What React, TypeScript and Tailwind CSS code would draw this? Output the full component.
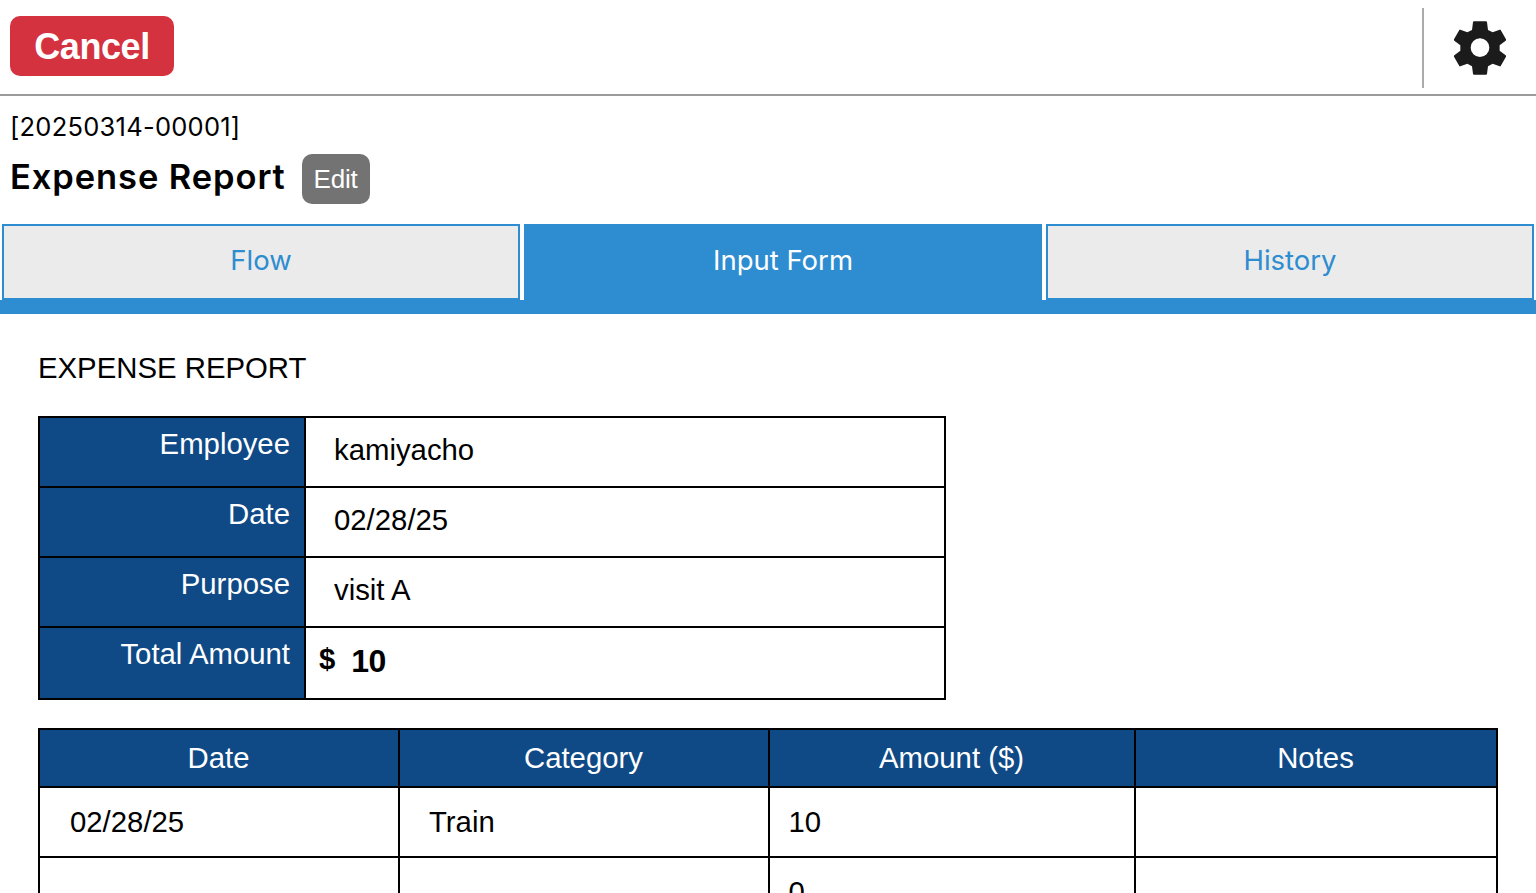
import { useState } from "react";

const tabs = [
  { id: "flow", label: "Flow", width: "w-[518px]" },
  { id: "form", label: "Input Form", width: "w-[518px]" },
  { id: "history", label: "History", width: "flex-1" },
];

const summary = [
  { label: "Employee", value: "kamiyacho" },
  { label: "Date", value: "02/28/25" },
  { label: "Purpose", value: "visit A" },
];

const columns = [
  { label: "Date", width: "w-[360px]" },
  { label: "Category", width: "w-[370px]" },
  { label: "Amount ($)", width: "w-[366px]" },
  { label: "Notes", width: "w-[362px]" },
];

const expenses = [
  { date: "02/28/25", category: "Train", amount: "10", notes: "" },
  { date: "", category: "", amount: "0", notes: "" },
];

const GearIcon = () => (
  <svg viewBox="0 0 180 180" className="h-[60px] w-[60px]" fill="#1b1b1b">
    <path
      fillRule="evenodd"
      d="M72 10h36q2 0 3 3l3 23 14 7 21-8q2-1 3 1l16 28q1 2-1 4l-18 14v16l18 14q2 2 1 4l-16 28q-1 2-3 1l-21-8-14 8-3 22q-1 3-3 3H72q-2 0-3-3l-3-22-14-8-21 8q-2 1-3-1l-16-28q-1-2 1-4l18-14V82L13 68q-2-2-1-4l16-28q1-2 3-1l21 8 14-7 3-23q1-3 3-3ZM90 61a28 28 0 1 0 0 56a28 28 0 1 0 0-56Z"
    />
  </svg>
);

const Header = () => (
  <header className="flex h-24 items-start justify-between border-b-2 border-[#9b9b9b]">
    <button className="ml-2.5 mt-4 h-[60px] w-[164px] rounded-[10px] bg-[#d5323f] pt-0.5 text-4xl leading-[58px] font-bold tracking-[-0.4px] text-white">
      Cancel
    </button>
    <div className="mt-2 flex h-20 w-[114px] items-center justify-center border-l-2 border-[#ababab]">
      <button aria-label="Settings">
        <GearIcon />
      </button>
    </div>
  </header>
);

const TitleBar = () => (
  <div className="h-32 px-2.5 pt-4">
    <p className="font-['Inter',sans-serif] text-[25.5px] leading-[30px] tracking-[0.25px]">
      [20250314-00001]
    </p>
    <div className="mt-3 flex items-start">
      <h1 className="w-[292px] font-['Inter',sans-serif] text-[34.5px] leading-[45px] font-semibold tracking-[0.9px] whitespace-nowrap">
        Expense Report
      </h1>
      <button className="h-[50px] w-[68px] rounded-[10px] bg-[#737373] pr-px text-[26px] leading-[50px] tracking-[-0.2px] text-white">
        Edit
      </button>
    </div>
  </div>
);

const App = () => {
  const [active, setActive] = useState("form");

  return (
    <div className="h-screen overflow-hidden bg-white font-['Liberation_Sans',Arial,sans-serif] text-black">
      <Header />
      <TitleBar />

      {/* Tabs */}
      <nav className="flex h-[90px] gap-1 border-b-[14px] border-[#2d8dd0] px-0.5">
        {tabs.map((tab) => (
          <button
            key={tab.id}
            onClick={() => setActive(tab.id)}
            className={`h-[76px] border-2 border-[#2d8dd0] pb-0.5 font-['Inter',sans-serif] text-[27.5px] font-normal ${tab.width} ${
              active === tab.id ? "bg-[#2d8dd0] text-white" : "bg-[#ebebeb] text-[#2d8dd0]"
            }`}
          >
            {tab.label}
          </button>
        ))}
      </nav>

      <main className="px-[38px] pt-9 text-[29.33px] leading-9">
        <h2>EXPENSE REPORT</h2>

        {/* Summary */}
        <table className="mt-[30px] w-[908px] table-fixed border-collapse">
          <tbody>
            {summary.map((row) => (
              <tr key={row.label} className="h-[70px]">
                <th className="w-[266px] border-2 border-black bg-[#0f4a86] pt-2 pr-3.5 text-right align-top font-normal text-white">
                  {row.label}
                </th>
                <td className="border-2 border-black p-0 pb-1 pl-7">{row.value}</td>
              </tr>
            ))}
            <tr className="h-[72px]">
              <th className="border-2 border-black bg-[#0f4a86] pt-2 pr-3.5 text-right align-top font-normal text-white">
                Total Amount
              </th>
              <td className="border-2 border-black p-0 pb-1 pl-[13px] font-bold">
                <div className="flex items-center gap-4">
                  <span className="pb-1">$</span>
                  <span className="text-[32px] tracking-[-0.5px]">10</span>
                </div>
              </td>
            </tr>
          </tbody>
        </table>

        {/* Expense lines */}
        <table className="mt-7 w-[1460px] table-fixed border-collapse">
          <thead>
            <tr className="h-[58px]">
              {columns.map((col) => (
                <th
                  key={col.label}
                  className={`border-2 border-black bg-[#0f4a86] p-0 pr-px font-normal text-white ${col.width}`}
                >
                  {col.label}
                </th>
              ))}
            </tr>
          </thead>
          <tbody>
            {expenses.map((row, i) => (
              <tr key={i} className="h-[70px]">
                <td className="border-2 border-black p-0 pl-[30px]">{row.date}</td>
                <td className="border-2 border-black p-0 pl-[29px]">{row.category}</td>
                <td className="border-2 border-black p-0 pl-[18.5px]">{row.amount}</td>
                <td className="border-2 border-black p-0 pl-[29px]">{row.notes}</td>
              </tr>
            ))}
          </tbody>
        </table>
      </main>
    </div>
  );
};

export default App;
